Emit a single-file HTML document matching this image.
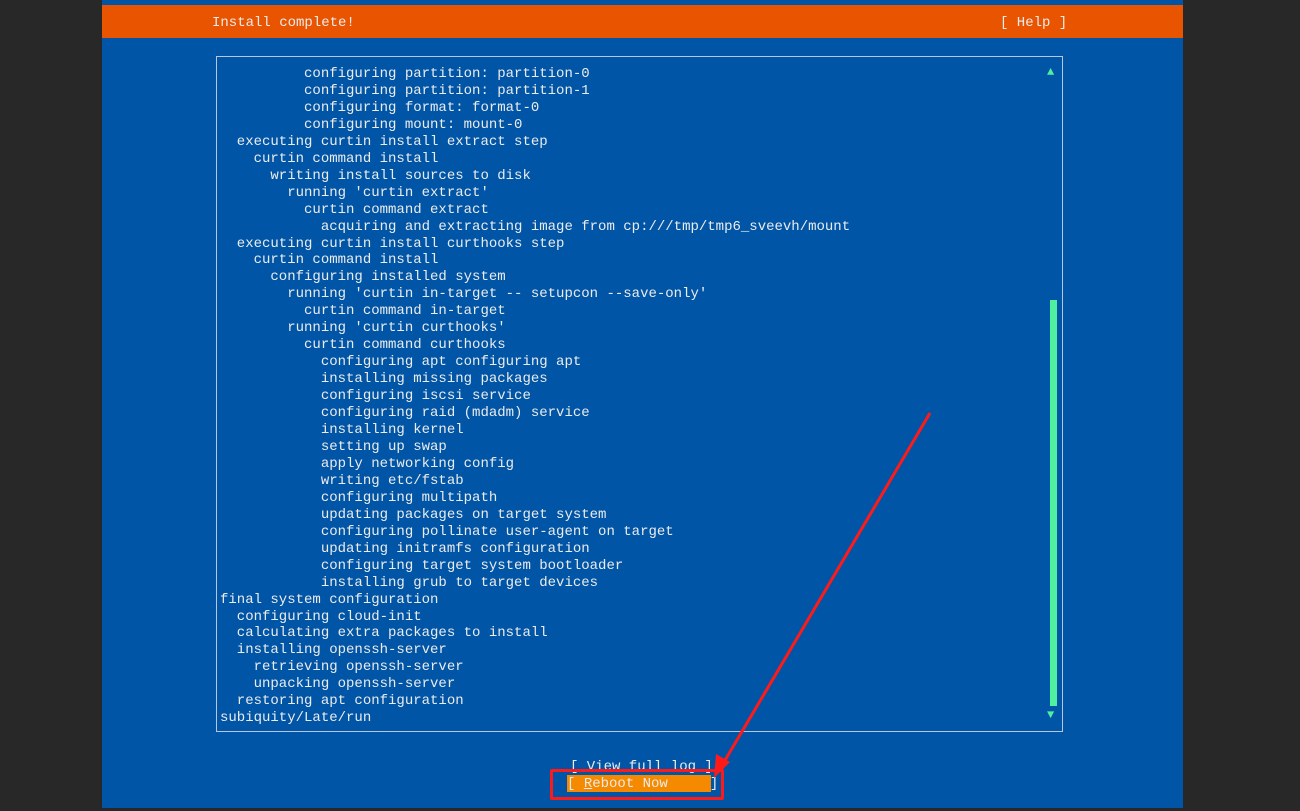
<!DOCTYPE html>
<html><head><meta charset="utf-8"><style>
body{margin:0;width:1300px;height:811px;background:#282828;position:relative;overflow:hidden;font-family:"Liberation Mono",monospace;font-size:14px;color:#fff}
.blue{position:absolute;left:102px;top:0;width:1081px;height:808px;background:#0055a6}
.bar{position:absolute;left:102px;top:5px;width:1081px;height:33px;background:#e95400}
.t{position:absolute;white-space:pre;line-height:17px;color:#ececec}
.box{position:absolute;left:216px;top:56px;width:845px;height:674px;border:1px solid #b7c7e0}
.log{position:absolute;left:220px;top:66px;white-space:pre;line-height:16.95px;color:#ececec}
.sb{position:absolute;left:1050px;top:300px;width:7px;height:406px;background:#4ff0a0}
</style></head><body>
<div class="blue"></div>
<div class="bar"></div>
<div class="t" style="left:212px;top:15px">Install complete!</div>
<div class="t" style="left:1000px;top:15px">[ Help ]</div>
<div class="box"></div>
<div class="t" style="left:1047px;top:64px;color:#4ff0a0;font-size:12px">▲</div>
<div class="t" style="left:1047px;top:707px;color:#4ff0a0;font-size:12px">▼</div>
<div class="sb"></div>
<div class="log">          configuring partition: partition-0
          configuring partition: partition-1
          configuring format: format-0
          configuring mount: mount-0
  executing curtin install extract step
    curtin command install
      writing install sources to disk
        running 'curtin extract'
          curtin command extract
            acquiring and extracting image from cp:///tmp/tmp6_sveevh/mount
  executing curtin install curthooks step
    curtin command install
      configuring installed system
        running 'curtin in-target -- setupcon --save-only'
          curtin command in-target
        running 'curtin curthooks'
          curtin command curthooks
            configuring apt configuring apt
            installing missing packages
            configuring iscsi service
            configuring raid (mdadm) service
            installing kernel
            setting up swap
            apply networking config
            writing etc/fstab
            configuring multipath
            updating packages on target system
            configuring pollinate user-agent on target
            updating initramfs configuration
            configuring target system bootloader
            installing grub to target devices
final system configuration
  configuring cloud-init
  calculating extra packages to install
  installing openssh-server
    retrieving openssh-server
    unpacking openssh-server
  restoring apt configuration
subiquity/Late/run</div>
<div class="t" style="left:570px;top:759px">[ View full log ]</div>
<div style="position:absolute;left:567px;top:775px;width:144px;height:17px;background:#f58a00"></div>
<div class="t" style="left:567px;top:776px">[ <u>R</u>eboot Now     ]</div>
<div style="position:absolute;left:550px;top:769px;width:168px;height:25px;border:3px solid #ff1a1a;border-radius:2px"></div>
<svg style="position:absolute;left:0;top:0" width="1300" height="811"><line x1="930" y1="413" x2="724" y2="762" stroke="#ff1a1a" stroke-width="3"/><polygon points="714,778 716,754 730,762" fill="#ff1a1a"/></svg>
</body></html>
